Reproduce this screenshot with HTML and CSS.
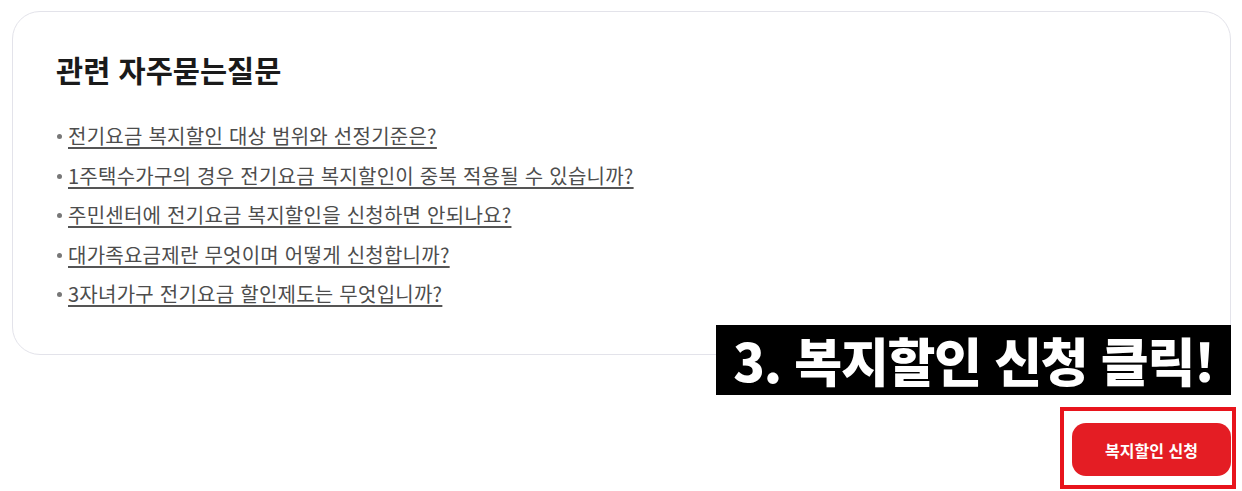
FILE: index.html
```html
<!DOCTYPE html>
<html lang="ko">
<head>
<meta charset="utf-8">
<title>관련 자주묻는질문</title>
<link rel="stylesheet" href="styles.css">
</head>
<body>
<div class="page">
  <section class="faq-card">
    <h2 class="faq-title">관련 자주묻는질문</h2>
    <ul class="faq-list">
      <li><a href="#">전기요금 복지할인 대상 범위와 선정기준은?</a></li>
      <li><a href="#">1주택수가구의 경우 전기요금 복지할인이 중복 적용될 수 있습니까?</a></li>
      <li><a href="#">주민센터에 전기요금 복지할인을 신청하면 안되나요?</a></li>
      <li><a href="#">대가족요금제란 무엇이며 어떻게 신청합니까?</a></li>
      <li><a href="#">3자녀가구 전기요금 할인제도는 무엇입니까?</a></li>
    </ul>
  </section>
  <div class="callout">3. 복지할인 신청 클릭!</div>
  <div class="action-row">
    <div class="highlight">
      <a class="apply-btn" href="#">복지할인 신청</a>
    </div>
  </div>
</div>
</body>
</html>
```

FILE: styles.css
```css
* { box-sizing: border-box; }
html, body { margin: 0; padding: 0; background: #fff; }
body {
  font-family: "Noto Sans CJK KR", "Noto Sans", sans-serif;
  color: #222;
}
.page {
  position: relative;
  width: 1242px;
  height: 491px;
  padding: 11px 6px 0 12px;
  overflow: hidden;
}
.faq-card {
  width: 1219px;
  height: 344px;
  border: 1px solid #e3e3ea;
  border-radius: 28px;
  padding: 37px 0 0 43px;
}
.faq-title {
  margin: 0;
  font-size: 29.5px;
  line-height: 40px;
  font-weight: 700;
  color: #1a1a1a;
  letter-spacing: 0;
}
.faq-list {
  list-style: none;
  margin: 27px 0 0;
  padding: 0;
}
.faq-list li {
  position: relative;
  line-height: 39.5px;
  padding-left: 12px;
  font-size: 20px;
  letter-spacing: 0.25px;
}
.faq-list li::before {
  content: "";
  position: absolute;
  left: 1px;
  top: 18px;
  width: 5px;
  height: 5px;
  border-radius: 50%;
  background: #777;
}
.faq-list a {
  color: #4d4d4d;
  text-decoration: underline;
  text-decoration-color: #555;
  text-decoration-thickness: 2px;
  text-underline-offset: 3px;
}
.callout {
  position: absolute;
  left: 716px;
  top: 325px;
  width: 515px;
  height: 70px;
  background: #000;
  color: #fff;
  font-weight: 900;
  font-size: 52px;
  line-height: 70px;
  text-align: center;
  letter-spacing: -1.2px;
}
.action-row {
  display: flex;
  justify-content: flex-end;
  margin-top: 52px;
}
.highlight {
  width: 176px;
  height: 82px;
  border: 4px solid #e8141c;
  padding: 12px 1px 9px 8px;
}
.apply-btn {
  display: flex;
  align-items: center;
  justify-content: center;
  width: 159px;
  height: 53px;
  background: #e41d24;
  border-radius: 14px;
  color: #fff;
  font-size: 16px;
  font-weight: 700;
  text-decoration: none;
  letter-spacing: 0;
}
```
